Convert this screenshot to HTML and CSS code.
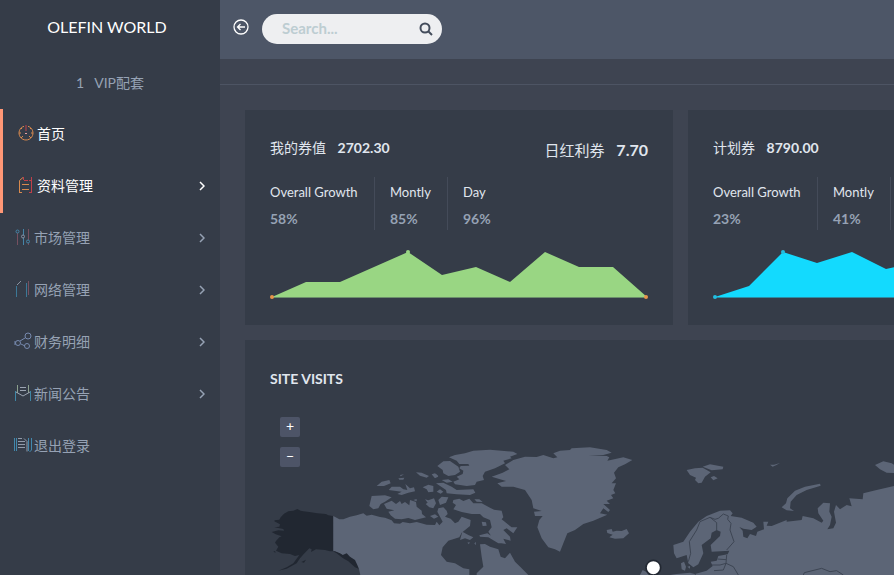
FILE: index.html
```html
<!DOCTYPE html>
<html lang="zh-CN">
<head>
    <meta charset="UTF-8">
    <meta name="viewport" content="width=device-width, initial-scale=1.0">
    <title>Olefin World</title>
    <link rel="stylesheet" href="styles.css">
</head>
<body>
    <aside class="sidebar">
        <h1 class="brand">OLEFIN WORLD</h1>
        <p class="level"><span>1</span><span>VIP配套</span></p>
        <nav>
            <ul class="menu">
                <li><a class="menu-link active" href="#">
                    <svg class="icon" viewBox="0 0 18 18" stroke="#d98a4e"><path d="M7 2.300A7 7 0 1 0 11 2.300M2 9h2M14 9h2M4 14l2-2M14 14l-2-2M4 4l1 1M14 4l-1 1"/><path stroke="#c0404a" d="M9 1v6"/><path stroke="#e8a0a0" d="M8 9.500h2"/></svg>
                    <span>首页</span></a></li>
                <li><a class="menu-link active" href="#">
                    <svg class="icon" viewBox="0 0 18 18" stroke="#d98a4e"><path d="M2.500 17V4.500L6 1.500M5 8.500h7M5 13.500h7M2 16.500h3"/><path stroke="#c0404a" d="M6.500 1v3M7 4.500h4M14.500 1v16M12 4.500h2M12 16.500h2"/></svg>
                    <span>资料管理</span><svg class="arrow" viewBox="0 0 6 10"><path d="M1 1l4 4-4 4"/></svg></a></li>
                <li><a class="menu-link" href="#">
                    <svg class="icon" viewBox="0 0 18 18" stroke="#4585a8"><path stroke="#765060" d="M3.500 5v12M14.500 1v11M14.500 15v2"/><path d="M9.500 1v6M9.500 10v7"/><circle cx="3.500" cy="3.500" r="1.500"/><circle cx="9" cy="8.500" r="1.500" stroke="#8792a5"/><circle cx="14" cy="13.500" r="1.500"/></svg>
                    <span>市场管理</span><svg class="arrow" viewBox="0 0 6 10"><path d="M1 1l4 4-4 4"/></svg></a></li>
                <li><a class="menu-link" href="#">
                    <svg class="icon" viewBox="0 0 18 18" stroke="#3c7897"><path d="M2.500 17V6M12.500 3v14"/><path stroke="#8992a0" d="M3 5l4-4"/><path stroke="#765060" d="M14.500 1v14"/></svg>
                    <span>网络管理</span><svg class="arrow" viewBox="0 0 6 10"><path d="M1 1l4 4-4 4"/></svg></a></li>
                <li><a class="menu-link" href="#">
                    <svg class="icon" viewBox="0 0 18 18" stroke="#7689ae"><circle cx="14" cy="4" r="3"/><circle cx="13" cy="14" r="2.500"/><circle cx="4" cy="11" r="2.500"/><path d="M6 9l5-3M7 12l4 2M1 9v4"/></svg>
                    <span>财务明细</span><svg class="arrow" viewBox="0 0 6 10"><path d="M1 1l4 4-4 4"/></svg></a></li>
                <li><a class="menu-link" href="#">
                    <svg class="icon" viewBox="0 0 18 18" stroke="#3f86a6"><path d="M1.500 7v10M16.500 7v10"/><path stroke="#8b9f8d" d="M3.500 1v8M14.500 1v8"/><path stroke="#9ba4b2" d="M6 3.500h6M6 6.500h6M2 8l7 4 7-4"/></svg>
                    <span>新闻公告</span><svg class="arrow" viewBox="0 0 6 10"><path d="M1 1l4 4-4 4"/></svg></a></li>
                <li><a class="menu-link" href="#">
                    <svg class="icon" viewBox="0 0 18 18" stroke="#4288ad"><path d="M.5 2v13M2.500 2v13M14.500 2v13M17.500 2v12l-2 2"/><path stroke="#929baa" d="M4 2.500h4M4 5.500h7M4 8.500h7M4 11.500h7M10 2.500l3 3v10"/></svg>
                    <span>退出登录</span></a></li>
            </ul>
        </nav>
    </aside>
    <div class="page">
        <header class="topbar">
            <button class="back" type="button" aria-label="Toggle menu">
                <svg viewBox="0 0 16 16"><circle cx="8" cy="8" r="7"/><path d="M12 8H4.500M7.500 5l-3 3 3 3"/></svg>
            </button>
            <form class="search">
                <input type="text" placeholder="Search..." aria-label="Search">
                <button type="submit" aria-label="Search">
                    <svg viewBox="0 0 14 14"><circle cx="6" cy="6" r="4.500"/><path d="M9.500 9.500l3.500 3.500"/></svg>
                </button>
            </form>
        </header>
        <div class="crumbs"></div>
        <main class="content">
            <section class="card">
                <div class="card-head">
                    <h2>我的券值 <b>2702.30</b></h2>
                    <h2 class="bonus">日红利券 <b>7.70</b></h2>
                </div>
                <dl class="stats">
                    <div><dt>Overall Growth</dt><dd>58%</dd></div>
                    <div><dt>Montly</dt><dd>85%</dd></div>
                    <div><dt>Day</dt><dd>96%</dd></div>
                </dl>
                <svg class="chart green" viewBox="0 0 378 50">
                    <path d="M2 48L36 33H70L138 3l34 23 34-8 34 15L275 3l34 15h34l34 30z"/>
                    <path class="base" d="M2 48.500H376"/>
                    <circle class="peak" cx="138" cy="3" r="2"/>
                    <circle class="end" cx="2" cy="48" r="2"/>
                    <circle class="end" cx="376" cy="48" r="2"/>
                </svg>
            </section>
            <section class="card">
                <div class="card-head">
                    <h2>计划券 <b>8790.00</b></h2>
                </div>
                <dl class="stats">
                    <div><dt>Overall Growth</dt><dd>23%</dd></div>
                    <div><dt>Montly</dt><dd>41%</dd></div>
                </dl>
                <svg class="chart blue" viewBox="0 0 378 50">
                    <path d="M2 48L36 37 70 3l34 11 35-11 34 17 34-7 34 20 34-20 34 10 34 10 33 15z"/>
                    <path class="base" d="M2 48.500H376"/>
                    <circle class="peak" cx="70" cy="3" r="2"/>
                    <circle class="end" cx="2" cy="48" r="2"/>
                    <circle class="end" cx="376" cy="48" r="2"/>
                </svg>
            </section>
            <section class="card visits">
                <h2>SITE VISITS</h2>
                <div class="map">
                    <svg viewBox="0 0 2463 750">
                        <!-- Alaska and mainland Canada -->
                        <g transform="translate(-90 -201)">
                            <path d="M280 528L298 538 310 538 330 530 350 526 370 520 380 527 395 524 420 531 435 533 455 541 462 550 480 551 488 546 510 550 530 546 560 554 585 555 590 545 598 556 608 545 600 530 592 515 595 505 610 502 620 512 623 522 615 530 632 536 645 550 655 545 665 530 692 540 690 558 665 578 658 592 625 602 608 622 603 645 620 665 645 670 670 685 688 688 690 950H400L362 710 357 687 308 645 280 632z"/>
                            <path class="dark" d="M279 528L265 526 258 522 232 520 208 516 190 514 182 512 172 507 160 512 145 514 132 521 122 532 118 539 104 541 103 544 120 553 118 560 103 562 130 567 132 572 115 571 95 576 107 583 125 589 118 592 108 603 105 608 115 620 108 632 125 640 150 642 165 648 178 645 160 670 140 682 115 692 140 686 170 670 180 655 192 641 208 625 215 628 213 636 228 628 255 630 270 634 285 634 300 640 308 645 320 640 330 650 345 660 352 675 357 687 345 682 325 664 308 654 290 640 279 634zM184 666l14-7-6 9zM100 635l5-2 2 5z"/>
                        </g>
                        <!-- western Arctic islands -->
                        <path transform="translate(270 99)" d="M35 168L75 166 95 172 75 185 62 192 55 205 40 208 28 198zM72 192L95 182 108 192 120 183 125 192 135 186 148 196 150 180 168 186 170 200 185 212 186 222 198 232 180 236 165 240 145 234 125 238 105 236 92 226 85 215 103 211 80 206zM50 138L65 125 88 120 92 130 72 138zM86 150L95 140 120 140 130 148 142 150 136 132 150 145 162 142 165 154 145 158 125 165 112 162 125 155zM120 105L132 103 122 109zM115 115L133 113 130 119 118 119zM168 97L185 98 207 108 200 113 180 107zM217 104L228 102 235 110 225 114zM188 142L205 134 220 138 220 155 205 157 200 148zM195 178L205 181 222 175 228 190 220 205 208 202 197 192 203 188zM230 155L240 148 250 155 242 161zM235 180L245 170 265 172 258 188 240 195zM210 228L225 223 235 230 222 236zM160 180L170 177 170 184z"/>
                        <!-- Ellesmere, Baffin and Quebec -->
                        <path transform="translate(480 99)" d="M57 52L75 45 105 40 130 32 180 29 250 35 262 42 240 50 245 55 220 62 225 70 195 85 165 95 158 108 162 120 140 125 135 135 110 138 75 133 70 125 88 118 80 110 98 102 100 92 88 85 92 78 118 77 115 72 88 72 80 62zM22 78L40 64 60 63 85 80 90 95 75 105 55 108 40 100 38 90zM5 103L15 100 25 108 15 114zM35 120L55 118 68 125 50 128zM18 130L40 128 65 140 80 150 130 148 136 158 120 165 80 163 50 160 48 150zM70 180L88 176 100 183 118 176 130 190 155 190 180 203 192 209 215 212 220 232 215 238 245 262 262 262 250 280 230 265 220 270 240 290 242 302 220 296 228 312 205 308 185 290 175 275 185 262 180 240 160 232 150 222 125 222 95 216 70 208 78 195 68 188zM133 178L148 178 158 186 140 185zM155 245L168 247 170 257 158 258zM90 300L97 275 115 285 130 292 120 300 105 295zM148 286L172 280 190 292 205 305 220 308 205 310 175 292 150 290zM112 308L119 306 117 313zM133 310L138 306 137 316zM140 600L140 400 160 380 155 350 150 313 165 312 180 320 205 328 212 350 225 355 240 338 255 365 275 385 295 405 340 500 340 600z"/>
                        <!-- Greenland, Iceland, Britain -->
                        <path transform="translate(570 69)" d="M95 140L128 128 148 118 135 105 160 90 195 80 230 81 250 75 280 85 292 82 280 70 300 62 330 60 335 55 390 52 440 60 455 68 430 75 385 76 440 78 448 82 442 92 490 82 517 90 495 103 475 112 462 128 468 145 455 160 468 160 460 180 466 190 453 195 460 205 440 212 450 222 430 222 450 240 445 246 430 235 420 250 442 254 400 272 370 282 345 300 322 310 310 340 300 365 285 358 265 352 245 325 232 292 238 270 248 258 225 258 222 245 245 243 220 235 215 210 195 180 160 170 125 170 112 160 138 153zM440 300L455 297 458 305 470 302 485 303 500 297 507 310 490 325 465 326 448 322 458 314 442 309zM540 435L548 420 558 425 580 450 585 520H545z"/>
                        <!-- northern Europe and Russia -->
                        <g transform="translate(1200 69)">
                            <path d="M10 345L40 335 60 305 85 275 110 258 150 242 180 241 188 250 182 258 215 263 250 278 260 290 245 300 220 296 208 291 218 302 220 320 232 325 240 312 258 318 262 305 282 298 280 275 295 275 290 287 305 288 350 270 350 275 395 270 398 258 430 265 455 278 460 272 445 250 443 235 460 218 480 220 478 245 485 260 480 285 472 298 490 295 498 278 492 245 498 225 510 238 530 225 545 229 538 205 578 208 580 190 620 180 672 168 1300 140V800H-100V450L20 432 60 428 75 432 110 422 128 408 122 395 140 392 145 378 173 373 178 362 125 365 122 345 150 318 152 305 140 300 125 308 122 325 95 345 100 370 85 403 70 412 55 400 50 375 20 385 12 370zM33 400L42 395 48 410 45 422 35 418zM52 410L60 408 60 416zM50 120L75 115 98 113 122 127 105 140 95 158 85 160 75 150 78 143 60 135zM98 110L120 103 160 110 158 118 125 121zM122 142L132 138 143 145 130 151zM300 104L312 104 330 99 318 106 308 110zM335 232L348 220 352 205 375 182 405 170 450 161 452 167 410 180 380 195 362 215 360 235 372 243 350 241zM615 105L640 94 665 100 690 115 690 130 650 128 630 118z"/>
                            <path class="border" d="M55 395L62 370 58 335 80 300 90 275 120 262 140 278 140 300M120 262L135 268 145 265 160 252 175 258 173 268 183 280 180 300 192 335 170 360M170 375L168 400 190 410 205 435M142 387L168 389M125 405L150 405 168 400 160 420 132 422M75 432L80 440M400 435L403 428 455 415 480 425 500 422 520 435"/>
                        </g>
                        <circle class="pin" cx="1150" cy="482" r="22"/>
                    </svg>
                    <div class="zoom">
                        <button type="button" aria-label="Zoom in">+</button>
                        <button type="button" aria-label="Zoom out">−</button>
                    </div>
                </div>
            </section>
        </main>
    </div>
</body>
</html>
```
FILE: styles.css
```css
:root {
    --page-bg: #3e4451;
    --panel-bg: #353c48;
    --topbar-bg: #4d5667;
    --text: #e0e6ee;
    --muted: #96a2b4;
    --accent: #ff9776;
    --land: #5c6576;
}
* {
    box-sizing: border-box;
}
body {
    margin: 0;
    height: 100vh;
    display: flex;
    overflow: hidden;
    background: var(--page-bg);
    color: var(--text);
    font-family: Lato, "Noto Sans CJK SC", sans-serif;
    font-size: 14px;
    line-height: 20px;
}
h1, h2, p, ul, dl, dd {
    margin: 0;
    padding: 0;
    font-weight: 400;
}
button {
    border: none;
    padding: 0;
    background: none;
    cursor: pointer;
}
svg {
    display: block;
    fill: none;
}
.sidebar {
    flex: none;
    width: 220px;
    background: var(--panel-bg);
}
.brand {
    padding: 17px 0;
    margin-right: 6px;
    text-align: center;
    font-size: 16px;
    line-height: 20px;
    color: #fff;
}
.level {
    display: flex;
    justify-content: center;
    gap: 10px;
    padding: 19px 0 16px;
    color: var(--muted);
}
.menu {
    list-style: none;
}
.menu-link {
    display: flex;
    align-items: center;
    height: 52px;
    padding: 0 15px 2px 14px;
    color: var(--muted);
    text-decoration: none;
}
.menu-link.active {
    border-left: 3px solid var(--accent);
    color: #fff;
}
.icon {
    width: 18px;
    height: 18px;
    margin: 0 2px 2px 0;
}
.arrow {
    width: 6px;
    height: 10px;
    margin-left: auto;
    stroke: currentColor;
    stroke-width: 1.5;
}
.page {
    flex: 1;
    min-width: 0;
}
.topbar {
    display: flex;
    align-items: center;
    padding: 14px 13px 15px;
    gap: 13px;
    background: var(--topbar-bg);
}
.back svg {
    width: 16px;
    height: 16px;
    margin-bottom: 4px;
    stroke: #fff;
    stroke-width: 1.3;
}
.search {
    display: flex;
    align-items: center;
    width: 180px;
    height: 30px;
    padding: 0 9px 0 20px;
    border-radius: 15px;
    background: #eeeff1;
}
.search input {
    flex: 1;
    min-width: 0;
    padding: 0 0 2px;
    border: none;
    outline: none;
    background: none;
    font: 700 15px/20px Lato, sans-serif;
}
.search input::placeholder {
    color: #bdcdd2;
}
.search svg {
    width: 14px;
    height: 14px;
    stroke: #444d5c;
    stroke-width: 2;
}
.crumbs {
    height: 26px;
    border-bottom: 1px solid #4d5463;
}
.content {
    display: grid;
    grid-template-columns: repeat(2, minmax(428px, 1fr));
    gap: 15px;
    padding: 25px;
}
.card {
    padding: 25px;
    background: var(--panel-bg);
}
.card-head {
    display: flex;
    justify-content: space-between;
    height: 42px;
    padding-top: 3px;
}
.card h2 {
    font-size: 14px;
    line-height: 20px;
}
.card h2 b {
    margin-left: 8px;
}
.card h2.bonus {
    font-size: 15px;
    line-height: 24px;
}
.card h2.bonus b {
    font-size: 16px;
}
.stats {
    display: grid;
    grid-template-columns: 105px 73px auto;
    height: 53px;
}
.stats div {
    padding-top: 5px;
}
.stats div + div {
    padding-left: 15px;
}
.stats div:nth-child(-n+2) {
    border-right: 1px solid #444b59;
}
.stats dt {
    font-size: 13px;
    line-height: 20px;
    white-space: nowrap;
}
.stats dd {
    padding-top: 7px;
    font-weight: 700;
    color: var(--muted);
}
.chart {
    width: 100%;
    margin: 19px 0 1px;
}
.green {
    fill: #99d683;
}
.blue {
    fill: #13dafe;
}
.chart .base {
    stroke: #6b8f6b;
}
.blue .base {
    stroke: #2c8ca4;
}
.green .end {
    fill: #e8944a;
}
.blue .end,
.blue .peak {
    fill: #22bde0;
}
.visits {
    grid-column: 1 / -1;
}
.card.visits h2 {
    padding-top: 4px;
    font-weight: 700;
}
.map {
    position: relative;
    margin-top: 18px;
}
.map svg {
    width: 100%;
    fill: var(--land);
}
.map .dark {
    fill: #212731;
}
.map .border {
    fill: none;
    stroke: #3d4553;
    stroke-width: 3;
}
.map .pin {
    fill: #fff;
    stroke: #222832;
    stroke-width: 5;
}
.zoom {
    position: absolute;
    top: 10px;
    left: 10px;
    display: grid;
    gap: 10px;
}
.zoom button {
    width: 20px;
    height: 20px;
    padding-bottom: 2px;
    border-radius: 2px;
    background: #4d5467;
    color: #fff;
    font: 14px/18px Lato, sans-serif;
}
```
